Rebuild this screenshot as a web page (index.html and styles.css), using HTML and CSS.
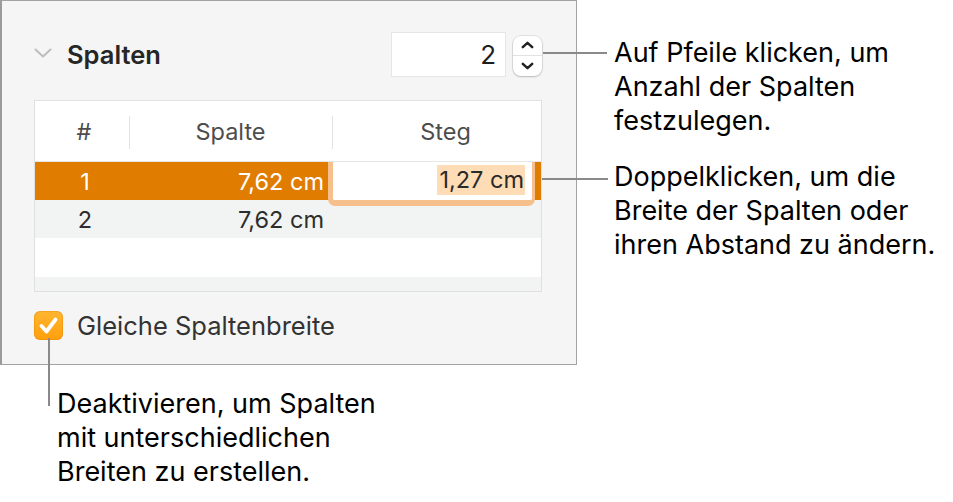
FILE: index.html
```html
<!DOCTYPE html>
<html lang="de">
<head>
<meta charset="utf-8">
<title>Spalten</title>
<link rel="stylesheet" href="styles.css">
</head>
<body>
<div class="page">
  <section class="panel">
    <div class="head">
      <svg class="disclosure" width="18" height="10" viewBox="0 0 18 10"><polyline points="1.5,1.5 9,8.5 16.5,1.5" fill="none" stroke="#bdbdbd" stroke-width="2" stroke-linecap="round" stroke-linejoin="round"/></svg>
      <span class="title">Spalten</span>
      <div class="count">2</div>
      <div class="stepper">
        <div class="step"><svg width="13" height="8" viewBox="0 0 13 8"><polyline points="1.8,6.2 6.5,1.8 11.2,6.2" fill="none" stroke="#222" stroke-width="2.5" stroke-linecap="round" stroke-linejoin="round"/></svg></div>
        <div class="step"><svg width="13" height="8" viewBox="0 0 13 8"><polyline points="1.8,1.8 6.5,6.2 11.2,1.8" fill="none" stroke="#222" stroke-width="2.5" stroke-linecap="round" stroke-linejoin="round"/></svg></div>
      </div>
    </div>
    <div class="table">
      <div class="row thead">
        <div class="c1">#</div>
        <div class="c2 sep">Spalte</div>
        <div class="c3 sep">Steg</div>
      </div>
      <div class="row sel">
        <div class="c1">1</div>
        <div class="c2 num">7,62 cm</div>
        <div class="c3 editcell">
          <div class="editor"><span class="hl">1,27 cm</span></div>
        </div>
      </div>
      <div class="row alt">
        <div class="c1">2</div>
        <div class="c2 num">7,62 cm</div>
        <div class="c3"></div>
      </div>
      <div class="row blank"></div>
      <div class="row alt short"></div>
    </div>
    <label class="check">
      <span class="box"><svg width="29" height="29" viewBox="0 0 29 29"><polyline points="7.5,15 12.5,20.5 21.5,8.5" fill="none" stroke="#fff" stroke-width="3.8" stroke-linecap="round" stroke-linejoin="round"/></svg></span>
      <span class="check-label">Gleiche Spaltenbreite</span>
    </label>
  </section>
  <div class="notes">
    <p class="note n1">Auf Pfeile klicken, um<br>Anzahl der Spalten<br>festzulegen.</p>
    <p class="note n2">Doppelklicken, um die<br>Breite der Spalten oder<br>ihren Abstand zu ändern.</p>
  </div>
  <p class="note n3">Deaktivieren, um Spalten<br>mit unterschiedlichen<br>Breiten zu erstellen.</p>
  <span class="lead l1"></span>
  <span class="lead l2"></span>
  <span class="lead l3"></span>
</div>
</body>
</html>
```
FILE: styles.css
```css
* { box-sizing: border-box; }
html, body { margin: 0; padding: 0; background: #fff; }
body {
  width: 953px;
  height: 502px;
  overflow: hidden;
  font-family: "Inter", "Liberation Sans", sans-serif;
  color: #000;
}
.page {
  position: relative;
  display: grid;
  grid-template-columns: 577px 1fr;
  grid-template-rows: 365px 1fr;
  height: 502px;
}
.panel {
  grid-column: 1;
  grid-row: 1;
  background: #f5f5f5;
  border: 1px solid #a2a2a2;
  border-left: 2px solid #9a9a9a;
  padding: 31px 0 0 32px;
}
.head {
  display: flex;
  align-items: center;
  height: 44px;
}
.disclosure { margin-top: -2px; }
.title {
  margin-left: 15px;
  font-size: 25.5px;
  font-weight: 600;
  color: #262626;
  flex: 1;
}
.count {
  width: 113px;
  height: 43px;
  background: #fff;
  box-shadow: 0 0 0 1px #e6e6e6, 0 1px 0 0 #c8c8c8;
  font-size: 26px;
  color: #1e1e1e;
  text-align: right;
  padding-right: 9px;
  line-height: 43px;
}
.stepper {
  margin-left: 8px;
  margin-right: 34px;
  width: 29px;
  height: 40px;
  margin-top: 3px;
  background: #fff;
  border-radius: 8px;
  box-shadow: 0 0 0 1px rgba(0,0,0,0.08), 0 1px 2px rgba(0,0,0,0.18);
  display: flex;
  flex-direction: column;
  overflow: hidden;
}
.step {
  flex: 1;
  display: flex;
  align-items: center;
  justify-content: center;
}
.step + .step { border-top: 1px solid #e2e2e2; }
.table {
  margin-top: 24px;
  width: 508px;
  border: 1px solid #e0e0e0;
  background: #fff;
  font-size: 23.5px;
  color: #2e2e2e;
}
.row {
  display: grid;
  grid-template-columns: 94px 203px 209px;
  height: 38px;
  align-items: center;
}
.row > div { height: 100%; display: flex; align-items: center; }
.thead {
  height: 61px;
  border-bottom: 1px solid #e6e6e6;
  color: #4d4d4d;
}
.thead > div { justify-content: center; }
.thead .c1 { padding-left: 4px; }
.thead .c3 { padding-left: 18px; }
.sep { position: relative; }
.sep::before {
  content: "";
  position: absolute;
  left: 0;
  top: 15px;
  bottom: 12px;
  width: 1px;
  background: #e2e2e2;
}
.c1 { justify-content: center; padding-left: 6px; }
.num { justify-content: flex-end; padding-right: 8px; }
.sel { background: #e07c00; color: #fff; }
.alt { background: #f2f4f4; }
.blank { height: 39px; }
.short { height: 14px; }
.editcell { position: relative; }
.editor {
  position: absolute;
  left: -4px;
  top: 0;
  width: 207px;
  height: 44px;
  background: #fff;
  border: solid #f5c08c;
  border-width: 0 3px 6px 5px;
  border-radius: 0 0 7px 7px;
  display: flex;
  align-items: center;
  justify-content: flex-end;
  padding-right: 7px;
  padding-bottom: 2px;
  color: #2a2a2a;
  z-index: 2;
}
.hl {
  background: #fedcb5;
  padding: 0 1px 1px 2px;
}
.check {
  display: flex;
  align-items: center;
  margin-top: 18px;
  gap: 14px;
}
.box {
  width: 29px;
  height: 29px;
  border-radius: 6px;
  background: linear-gradient(#ffb631, #ff9f0c);
  box-shadow: inset 0 0 0 1px rgba(220,130,0,0.35);
  display: block;
}
.box svg { display: block; }
.check-label {
  font-size: 25.5px;
  color: #333;
}
.notes {
  grid-column: 2;
  grid-row: 1 / span 2;
  padding: 36px 0 0 37px;
}
.note {
  margin: 0;
  font-size: 27px;
  line-height: 34px;
  color: #000;
}
.n2 { margin-top: 22px; }
.n3 {
  grid-column: 1;
  grid-row: 2;
  padding: 22px 0 0 57px;
}
.lead {
  position: absolute;
  background: #8a8a8a;
  display: block;
}
.l1 { left: 543px; top: 52px; width: 64px; height: 2px; }
.l2 { left: 542px; top: 178px; width: 66px; height: 2px; }
.l3 { left: 48px; top: 338px; width: 2px; height: 68px; }
```
